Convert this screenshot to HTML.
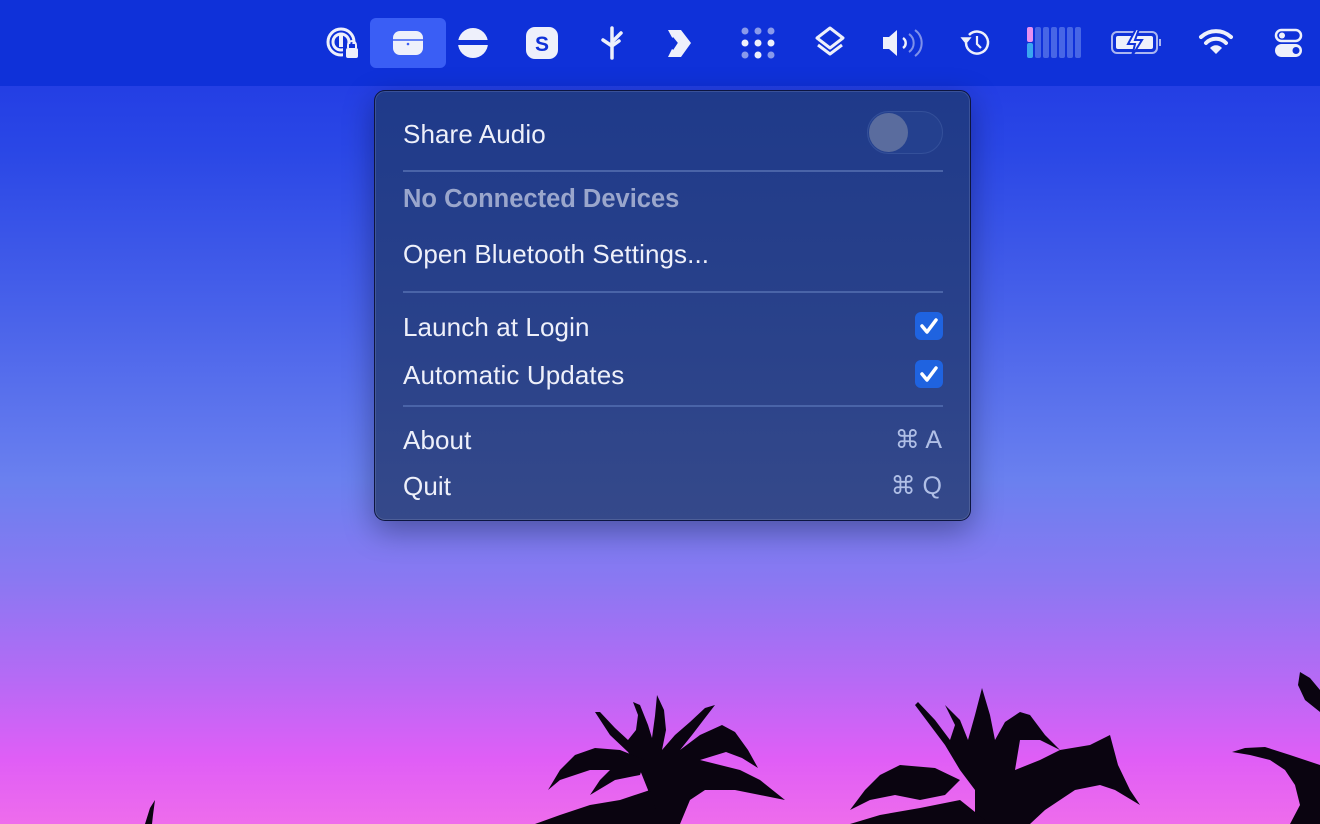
<!DOCTYPE html>
<html><head><meta charset="utf-8"><style>
*{margin:0;padding:0;box-sizing:border-box}
body{width:1320px;height:824px;overflow:hidden;position:relative;font-family:"Liberation Sans",sans-serif;
background:linear-gradient(180deg,#1b33e2 0px,#2a47e6 150px,#4a63ea 320px,#6a80ef 480px,#8a78f2 580px,#b66af5 680px,#e05ef6 760px,#ee6cec 824px)}
.bar{position:absolute;left:0;top:0;width:1320px;height:86px;background:#0f31d9}
.menu{position:absolute;left:374px;top:90px;width:597px;height:431px;border-radius:11px;border:1px solid #0c1540;
background:linear-gradient(180deg,#1f3a8a,#2a428a 60%,#35498a);box-shadow:0 10px 30px rgba(0,0,20,.35), inset 0 0 0 1px rgba(255,255,255,.12)}
.t{position:absolute;left:28px;color:#eef0fa;font-size:26px;line-height:28px;letter-spacing:.1px}
.sep{position:absolute;left:28px;width:540px;height:2px;background:#4a64a8}
.cb{position:absolute;left:540px;width:28px;height:28px;border-radius:6px;background:#1f63e0}
.sc{position:absolute;right:28px;color:#b0bfe6;font-size:25px;line-height:28px}
</style></head><body>
<div class="bar">
<div style="position:absolute;left:370px;top:18px;width:76px;height:50px;border-radius:6px;background:#3a5ef5"></div>
<svg width="1320" height="86" style="position:absolute;left:0;top:0" fill="#eef0fb" stroke="#eef0fb">
<circle cx="341" cy="42" r="13" fill="none" stroke-width="3"/><circle cx="341" cy="42" r="8" fill="none" stroke-width="3"/>
<rect x="339" y="35" width="4" height="12" stroke="none"/><rect x="343" y="44" width="15" height="14" fill="#0f31d9" stroke="none"/>
<rect x="346" y="48" width="12" height="10" rx="2" stroke="none"/><path d="M348 48v-3a4 4 0 0 1 8 0v3" fill="none" stroke-width="2"/>
<rect x="393" y="31" width="30" height="24" rx="7" stroke="none"/><line x1="393" y1="40" x2="423" y2="40" stroke="#3a5ef5" stroke-width="1.5"/><circle cx="408" cy="44" r="1.3" fill="#3a5ef5" stroke="none"/>
<circle cx="473" cy="43" r="15" stroke="none"/><rect x="456" y="40" width="34" height="5" fill="#0f31d9" stroke="none"/>
<rect x="526" y="27" width="32" height="32" rx="9" stroke="none"/><text x="542" y="51" font-size="21" font-weight="bold" text-anchor="middle" fill="#0f31d9" stroke="none" font-family="Liberation Sans">S</text>
<path d="M612 28v30M603 40l9 6M621 33l-9 9M619 41l-7 5" fill="none" stroke-width="3.5" stroke-linecap="round"/>
<path d="M668 30h13l10 13l-10 14h-13l7-14z" stroke="none"/><path d="M672 38l4 5l-4 6" fill="none" stroke="#0f31d9" stroke-width="3"/>
<g stroke="none"><g opacity=".55"><circle cx="745" cy="31" r="3.5"/><circle cx="758" cy="31" r="3.5"/><circle cx="771" cy="31" r="3.5"/><circle cx="745" cy="55" r="3.5"/><circle cx="771" cy="55" r="3.5"/></g>
<circle cx="745" cy="43" r="3.5"/><circle cx="758" cy="43" r="3.5"/><circle cx="771" cy="43" r="3.5"/><circle cx="758" cy="55" r="3.5"/></g>
<path d="M830 28l13 10l-13 10l-13-10z M818 45l12 9l12-9" fill="none" stroke-width="3" stroke-linejoin="round"/>
<path d="M883 37h6l8-7v26l-8-7h-6z" stroke="none"/><path d="M903 38a6 6 0 0 1 0 10" fill="none" stroke-width="2.5"/>
<path d="M909 34a11 11 0 0 1 0 18M915 30a16 16 0 0 1 0 26" fill="none" stroke-width="2" opacity=".5"/>
<path d="M966 43a11 11 0 1 0 3-8" fill="none" stroke-width="2.5"/><path d="M962 38l4 5l4-5z" stroke-width="1.5"/><path d="M977 36v8l4 4" fill="none" stroke-width="2.2"/>
<g stroke="none" fill="#4766e6"><rect x="1035" y="27" width="6" height="31" rx="2"/><rect x="1043" y="27" width="6" height="31" rx="2"/><rect x="1051" y="27" width="6" height="31" rx="2"/><rect x="1059" y="27" width="6" height="31" rx="2"/><rect x="1067" y="27" width="6" height="31" rx="2"/><rect x="1075" y="27" width="6" height="31" rx="2"/></g>
<rect x="1027" y="27" width="6" height="15" rx="2" fill="#e890f0" stroke="none"/><rect x="1027" y="43" width="6" height="15" rx="2" fill="#3aa6f0" stroke="none"/>
<rect x="1112" y="32" width="45" height="21" rx="5" fill="none" stroke-width="2" opacity=".7"/><rect x="1116" y="36" width="37" height="13" rx="2" stroke="none"/>
<rect x="1159" y="39" width="2" height="7" stroke="none" opacity=".7"/>
<path d="M1136 29l-8 15h7l-3 12l10-16h-7l4-11z" fill="#eef0fb" stroke="#0f31d9" stroke-width="2"/>
<path d="M1201 37a22 22 0 0 1 30 0M1206 43a14 14 0 0 1 20 0" fill="none" stroke-width="4" stroke-linecap="round"/><path d="M1210 48l6 6l6-6a8 8 0 0 0-12 0z" stroke="none"/>
<rect x="1276" y="30" width="25" height="11" rx="5.5" fill="none" stroke-width="2.5"/><circle cx="1282" cy="35.5" r="3" stroke="none"/>
<rect x="1275" y="44" width="27" height="13" rx="6.5" stroke="none"/><circle cx="1296" cy="50.5" r="3.5" fill="#0f31d9" stroke="none"/>
</svg>
</div>
<svg width="1320" height="824" style="position:absolute;left:0;top:0" fill="#0a0410">
<!-- tree 1 -->
<path d="M655 824 L648 790 L640 770 L628 752 L610 735 L595 712 L600 712 L615 728 L628 740 L636 730 L638 715 L633 702 L640 705 L648 725 L652 738 L655 716 L657 695 L664 710 L666 730 L662 750 L675 735 L690 722 L705 708 L715 705 L705 718 L692 735 L680 750 L700 735 L722 725 L735 732 L748 750 L758 768 L742 758 L726 752 L700 760 L740 770 L760 780 L785 800 L760 795 L735 790 L705 790 L690 800 L680 824 Z"/>
<path d="M645 760 L620 750 L595 748 L575 755 L560 770 L548 790 L560 780 L575 775 L590 770 L610 770 L600 780 L590 795 L615 780 L640 775 Z"/>
<path d="M650 790 L620 800 L590 805 L560 815 L535 824 L660 824 Z"/>
<!-- tree 2 -->
<path d="M975 824 L975 790 L960 770 L945 745 L930 725 L915 705 L918 702 L935 720 L950 740 L955 725 L945 705 L960 720 L968 740 L975 715 L982 688 L990 715 L995 740 L1005 722 L1020 712 L1030 715 L1045 735 L1060 750 L1040 740 L1020 740 L1015 770 L1040 760 L1060 750 L1090 745 L1110 735 L1118 765 L1130 790 L1140 805 L1115 790 L1100 785 L1075 790 L1060 800 L1045 810 L1030 824 Z"/>
<path d="M960 780 L935 768 L900 765 L880 775 L865 790 L850 810 L870 800 L895 795 L920 800 L945 795 Z"/>
<path d="M960 800 L920 808 L880 815 L850 824 L990 824 Z"/>
<!-- tree 3 -->
<path d="M1320 765 L1290 755 L1265 747 L1245 748 L1232 752 L1250 755 L1270 760 L1285 770 L1295 785 L1300 805 L1290 824 L1320 824 Z"/>
<path d="M1320 690 L1310 678 L1300 672 L1298 685 L1305 700 L1320 712 Z"/>
<path d="M145 824 L150 808 L155 800 L153 815 L152 824 Z"/>
</svg>
<div class="menu">
<div class="t" style="top:29px">Share Audio</div>
<div style="position:absolute;left:492px;top:20px;width:76px;height:43px;border-radius:22px;background:#24408e;border:1px solid #34509a"></div>
<div style="position:absolute;left:494px;top:22px;width:39px;height:39px;border-radius:50%;background:#5a6c9e"></div>
<div class="sep" style="top:79px"></div>
<div class="t" style="top:94px;color:#9aa6cc;font-weight:bold;font-size:25.5px;letter-spacing:0">No Connected Devices</div>
<div class="t" style="top:149px">Open Bluetooth Settings...</div>
<div class="sep" style="top:200px"></div>
<div class="t" style="top:222px">Launch at Login</div>
<div class="cb" style="top:221px"><svg width="28" height="28"><path d="M7 14l5 6l9-12" fill="none" stroke="#fff" stroke-width="3.5" stroke-linecap="round" stroke-linejoin="round"/></svg></div>
<div class="t" style="top:270px">Automatic Updates</div>
<div class="cb" style="top:269px"><svg width="28" height="28"><path d="M7 14l5 6l9-12" fill="none" stroke="#fff" stroke-width="3.5" stroke-linecap="round" stroke-linejoin="round"/></svg></div>
<div class="sep" style="top:314px"></div>
<div class="t" style="top:335px">About</div><div class="sc" style="top:335px">⌘ A</div>
<div class="t" style="top:381px">Quit</div><div class="sc" style="top:381px">⌘ Q</div>
</div>
</body></html>
